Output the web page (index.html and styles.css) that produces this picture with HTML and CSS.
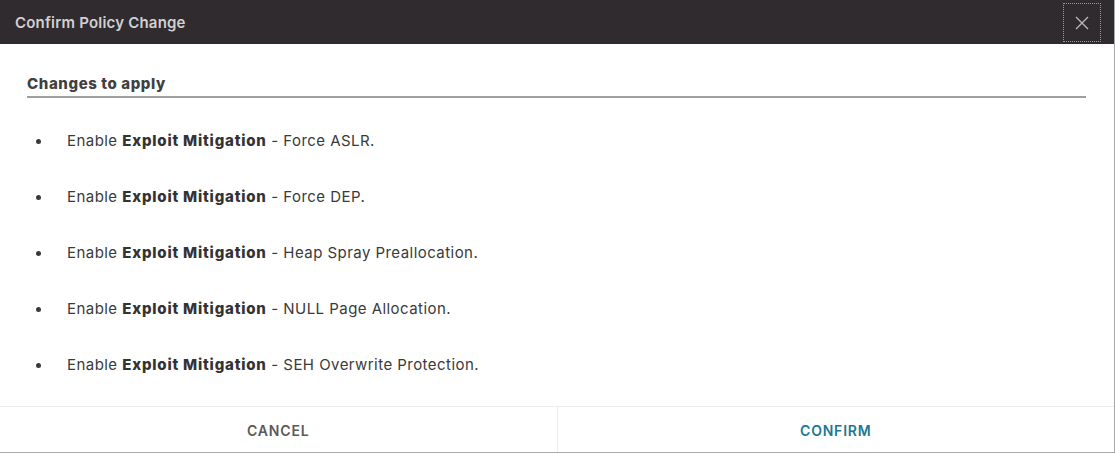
FILE: index.html
```html
<!doctype html>
<html>
<head>
	<title>Confirm Policy Change</title>
	<link rel="stylesheet" href="styles.css">
</head>
<body>
	<div class="dialog">
		<div class="dialog-header">
			<span class="dialog-title">Confirm Policy Change</span>
			<button class="close-btn" aria-label="Close">
				<svg width="14" height="14" viewBox="0 0 14 14">
					<path d="M1 1 L13 13 M13 1 L1 13" stroke="#b9b7b9" stroke-width="1.4" fill="none"/>
				</svg>
			</button>
		</div>
		<div class="dialog-body">
			<h3 class="section-title">Changes to apply</h3>
			<ul class="changes">
				<li><span class="dot"></span><span>Enable <b>Exploit Mitigation</b> - Force ASLR.</span></li>
				<li><span class="dot"></span><span>Enable <b>Exploit Mitigation</b> - Force DEP.</span></li>
				<li><span class="dot"></span><span>Enable <b>Exploit Mitigation</b> - Heap Spray Preallocation.</span></li>
				<li><span class="dot"></span><span>Enable <b>Exploit Mitigation</b> - NULL Page Allocation.</span></li>
				<li><span class="dot"></span><span>Enable <b>Exploit Mitigation</b> - SEH Overwrite Protection.</span></li>
			</ul>
		</div>
		<div class="dialog-footer">
			<button class="footer-btn cancel">CANCEL</button>
			<button class="footer-btn confirm">CONFIRM</button>
		</div>
	</div>
</body>
</html>
```

FILE: styles.css
```css
body {
	margin: 0;
	background-color: #ffffff;
	font-family: Inter, "Liberation Sans", sans-serif;
}

.dialog {
	width: 1114px;
	height: 452px;
	border-right: 1px solid #a9a9a9;
	border-bottom: 1px solid #a9a9a9;
	display: flex;
	flex-direction: column;
	background-color: #ffffff;
}

.dialog-header {
	height: 44px;
	background-color: #2f2b2f;
	display: flex;
	align-items: center;
	justify-content: space-between;
	padding: 0 13px 0 15px;
	flex-shrink: 0;
}

.dialog-title {
	color: #d2d0d2;
	font-size: 15px;
	font-weight: 600;
	letter-spacing: 0.2px;
}

.close-btn {
	width: 38px;
	height: 39px;
	background: transparent;
	border: 1px dotted #9a989a;
	display: flex;
	align-items: center;
	justify-content: center;
	padding: 0;
	margin-top: 1px;
}

.dialog-body {
	flex: 1;
	padding: 30px 28px 0 27px;
}

.section-title {
	margin: 0;
	font-size: 15px;
	line-height: 20px;
	font-weight: 800;
	letter-spacing: 0.6px;
	color: #404040;
	padding-bottom: 2px;
	border-bottom: 2px solid #9f9f9f;
}

.changes {
	list-style: none;
	margin: 33px 0 0 0;
	padding: 0;
	display: flex;
	flex-direction: column;
	gap: 36px;
}

.changes li {
	display: flex;
	align-items: center;
	font-size: 15px;
	line-height: 20px;
	letter-spacing: 0.45px;
	color: #3a3a3a;
}

.changes b {
	font-weight: 800;
	letter-spacing: 0.8px;
	color: #333333;
}

.dot {
	width: 5px;
	height: 5px;
	border-radius: 50%;
	background-color: #3a3a3a;
	margin: 0 26px 0 9px;
	flex-shrink: 0;
}

.dialog-footer {
	height: 45px;
	border-top: 1px solid #ececec;
	display: flex;
	flex-shrink: 0;
}

.footer-btn {
	flex: 1;
	background: #ffffff;
	border: none;
	font-family: Inter, "Liberation Sans", sans-serif;
	font-size: 14px;
	font-weight: 600;
	letter-spacing: 0.8px;
	padding-top: 3px;
}

.footer-btn.cancel {
	color: #5a5a5a;
	border-right: 1px solid #ececec;
}

.footer-btn.confirm {
	color: #1b7894;
}
```
